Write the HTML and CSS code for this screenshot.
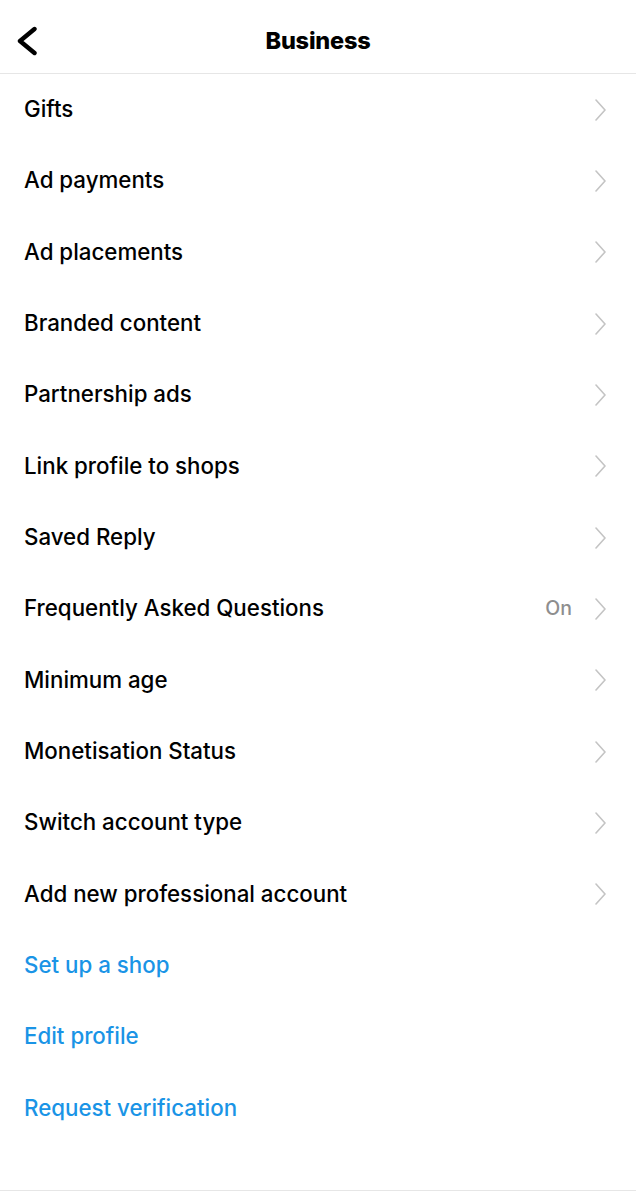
FILE: index.html
```html
<!DOCTYPE html>
<html lang="en">
<head>
  <meta charset="UTF-8">
  <title>Business</title>
  <link rel="stylesheet" href="styles.css">
</head>
<body>

  <header class="topbar">
    <button class="back" aria-label="Back">
      <svg width="24" height="30" viewBox="0 0 24 30"><path d="M19.5 3 L5 15 L19.5 27" fill="none" stroke="#000" stroke-width="4.4" stroke-linecap="round" stroke-linejoin="round"/></svg>
    </button>
    <h1>Business</h1>
  </header>

  <ul class="menu">
    <li class="row"><span>Gifts</span><svg class="chev" viewBox="0 0 14 22"><path d="M2 1 L11 11 L2 21"/></svg></li>
    <li class="row"><span>Ad payments</span><svg class="chev" viewBox="0 0 14 22"><path d="M2 1 L11 11 L2 21"/></svg></li>
    <li class="row"><span>Ad placements</span><svg class="chev" viewBox="0 0 14 22"><path d="M2 1 L11 11 L2 21"/></svg></li>
    <li class="row"><span>Branded content</span><svg class="chev" viewBox="0 0 14 22"><path d="M2 1 L11 11 L2 21"/></svg></li>
    <li class="row"><span>Partnership ads</span><svg class="chev" viewBox="0 0 14 22"><path d="M2 1 L11 11 L2 21"/></svg></li>
    <li class="row"><span>Link profile to shops</span><svg class="chev" viewBox="0 0 14 22"><path d="M2 1 L11 11 L2 21"/></svg></li>
    <li class="row"><span>Saved Reply</span><svg class="chev" viewBox="0 0 14 22"><path d="M2 1 L11 11 L2 21"/></svg></li>
    <li class="row"><span>Frequently Asked Questions</span><em class="value">On</em><svg class="chev" viewBox="0 0 14 22"><path d="M2 1 L11 11 L2 21"/></svg></li>
    <li class="row"><span>Minimum age</span><svg class="chev" viewBox="0 0 14 22"><path d="M2 1 L11 11 L2 21"/></svg></li>
    <li class="row"><span>Monetisation Status</span><svg class="chev" viewBox="0 0 14 22"><path d="M2 1 L11 11 L2 21"/></svg></li>
    <li class="row"><span>Switch account type</span><svg class="chev" viewBox="0 0 14 22"><path d="M2 1 L11 11 L2 21"/></svg></li>
    <li class="row"><span>Add new professional account</span><svg class="chev" viewBox="0 0 14 22"><path d="M2 1 L11 11 L2 21"/></svg></li>
    <li class="row link"><span>Set up a shop</span></li>
    <li class="row link"><span>Edit profile</span></li>
    <li class="row link"><span>Request verification</span></li>
  </ul>

</body>
</html>
```
FILE: styles.css
```css
* {
  box-sizing: border-box;
}
body {
  margin: 0;
  font-family: Inter, Roboto, sans-serif;
  background: #fff;
  color: #000;
}
.topbar {
  height: 74px;
  border-bottom: 1px solid #e6e6e6;
  display: flex;
  align-items: center;
  justify-content: center;
  position: relative;
  padding-top: 8px;
}
.topbar h1 {
  margin: 0;
  font-size: 23.5px;
  font-weight: 800;
  letter-spacing: -0.2px;
}
.back {
  position: absolute;
  left: 15px;
  top: 26px;
  background: none;
  border: none;
  padding: 0;
  line-height: 0;
}
.menu {
  list-style: none;
  margin: 0;
  padding: 0 0 46px;
  border-bottom: 1px solid #e6e6e6;
}
.row {
  height: 71.33px;
  display: flex;
  align-items: center;
  padding: 0 28px 0 24px;
  font-size: 22.3px;
  font-weight: 500;
}
.row span {
  flex: 1;
  padding-bottom: 2px;
}
.row.link {
  color: #1a94e6;
}
.value {
  font-style: normal;
  color: #8e8e8e;
  font-size: 19.5px;
  margin-right: 22px;
  padding-bottom: 2px;
}
.chev {
  width: 14px;
  height: 22px;
  fill: none;
  stroke: #c4c4c4;
  stroke-width: 1.6;
  stroke-linecap: round;
  stroke-linejoin: round;
}
```
